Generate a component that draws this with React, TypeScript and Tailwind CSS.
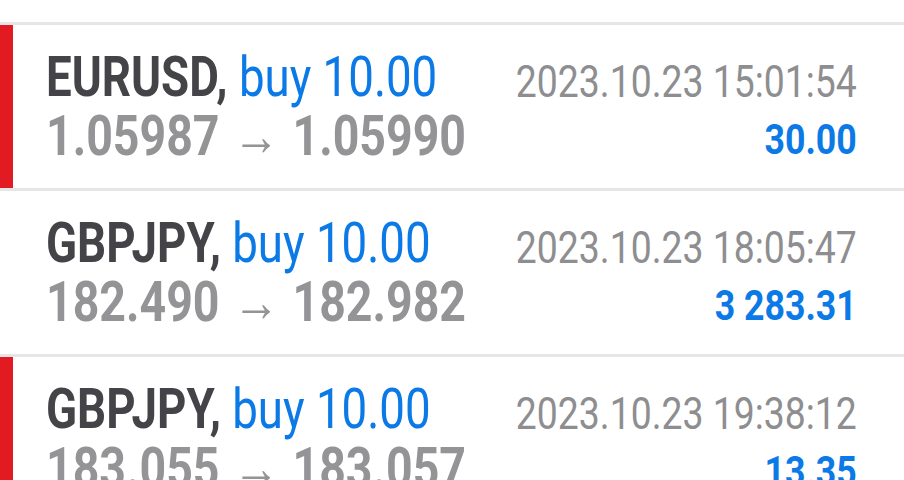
import React from 'react';

type Deal = {
  symbol: string;
  side: string;
  open: string;
  close: string;
  time: string;
  profit: string;
  marked: boolean;
};

const deals: Deal[] = [
  { symbol: 'EURUSD', side: 'buy 10.00', open: '1.05987', close: '1.05990', time: '2023.10.23 15:01:54', profit: '30.00', marked: true },
  { symbol: 'GBPJPY', side: 'buy 10.00', open: '182.490', close: '182.982', time: '2023.10.23 18:05:47', profit: '3 283.31', marked: false },
  { symbol: 'GBPJPY', side: 'buy 10.00', open: '183.055', close: '183.057', time: '2023.10.23 19:38:12', profit: '13.35', marked: true },
];

const DealRow = ({ deal }: { deal: Deal }) => (
  <div className="flex h-[166px] w-full border-t-[3px] border-[#e6e6e6] bg-white">
    <div className={`w-[13px] shrink-0 ${deal.marked ? 'bg-[#e21b22]' : 'bg-white'}`} />
    <div className="flex min-w-0 flex-1 pl-[33px] pr-[47px]">
      {/* Symbol, volume and prices */}
      <div className="flex min-w-0 flex-1 justify-start">
        <div className="shrink-0 origin-left scale-x-[0.83] pt-[23px] whitespace-nowrap">
          <div className="text-[55px] leading-[59px]">
            <span className="font-bold text-[#434348]">{deal.symbol},</span>{' '}
            <span className="text-[#0b7ae6]">{deal.side}</span>
          </div>
          <div className="text-[56px] leading-[59px] font-bold text-[#949497]">
            {deal.open}
            <span className="mx-[16px] font-normal">→</span>
            {deal.close}
          </div>
        </div>
      </div>
      {/* Time and profit */}
      <div className="flex min-w-0 flex-1 justify-end">
        <div className="shrink-0 origin-right scale-x-[0.83] pt-[27px] text-right whitespace-nowrap">
          <div className="text-[45px] leading-[59px] text-[#8e8e91]">{deal.time}</div>
          <div className="text-[43px] leading-[56px] font-bold text-[#0b7ae6]">{deal.profit}</div>
        </div>
      </div>
    </div>
  </div>
);

export default function App() {
  return (
    <div className="h-[480px] w-[904px] overflow-hidden bg-white pt-[22px] font-['Roboto',sans-serif]">
      {deals.map((deal, i) => (
        <DealRow key={i} deal={deal} />
      ))}
    </div>
  );
}
